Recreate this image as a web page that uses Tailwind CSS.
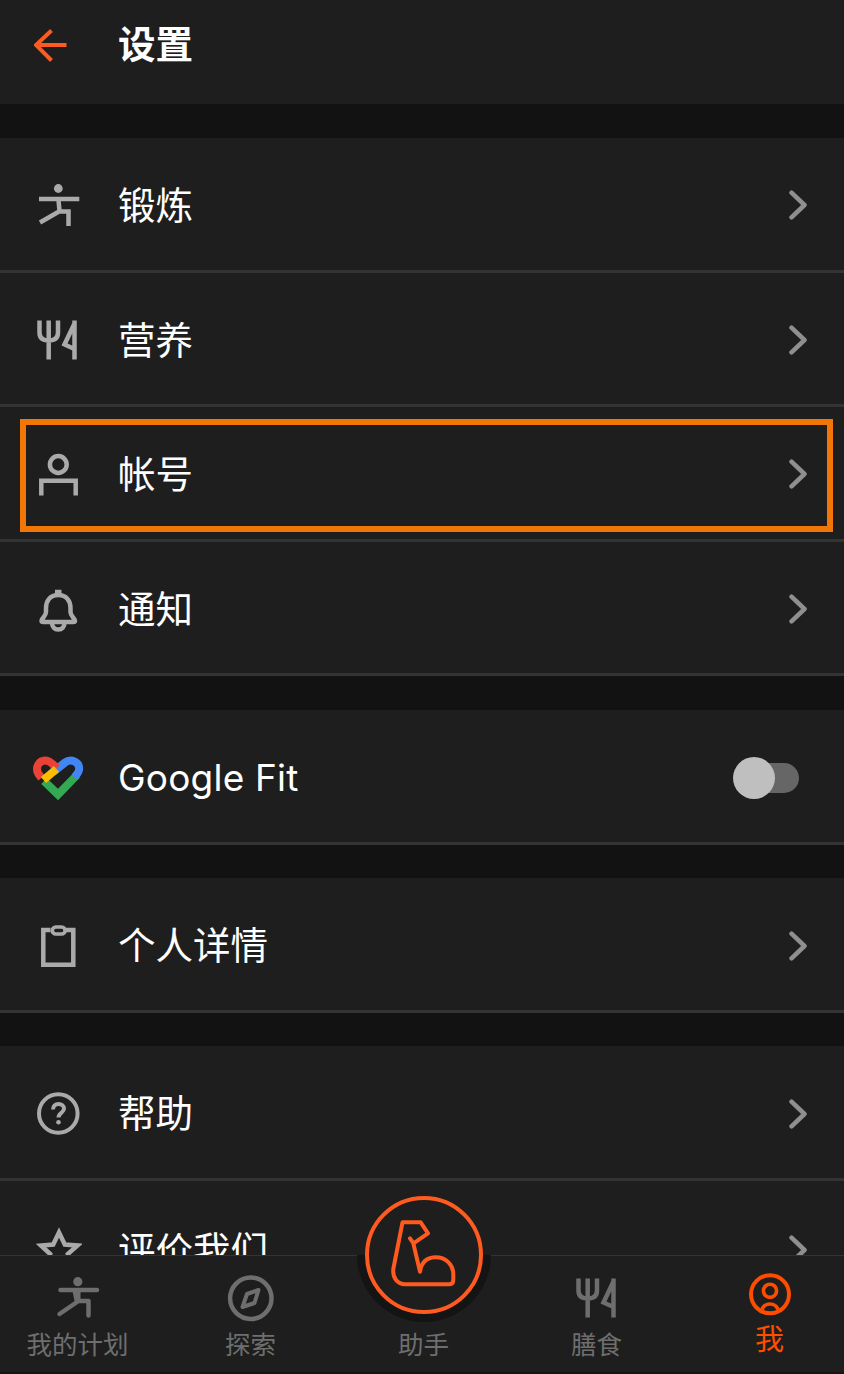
<!DOCTYPE html>
<html lang="zh-CN">
<head>
<meta charset="utf-8">
<title>设置</title>
<script src="https://cdn.jsdelivr.net/npm/@tailwindcss/browser@4"></script>
</head>
<body class="bg-[#121212]">
<div class="relative w-[844px] h-[1374px] overflow-hidden bg-[#121212] text-white font-['Inter','Noto_Sans_CJK_SC',sans-serif]">

  <header class="h-[104px] bg-[#1e1e1e] flex items-center pl-[34px] pb-[14px] mb-[34px]">
    <svg class="w-[48px] h-[48px] shrink-0" viewBox="34 21 48 48" fill="none" stroke="#ff5a1f" stroke-width="4"><path d="M66.5 45H36.5M51.5 30.5L36 45L51.5 60.5"/></svg>
    <h1 class="ml-[36px] text-[37.5px] leading-none font-bold">设置</h1>
  </header>

  <section class="mb-[34px]">
    <div class="h-[134.5px] bg-[#1e1e1e] border-b-[3px] border-[#333333] pt-[3px] flex items-center pl-[34px] pr-[37px]">
      <svg class="w-[48px] h-[48px] shrink-0" viewBox="34 181 48 48" fill="none" stroke="#aaaaaa" stroke-width="4.5"><circle cx="58.3" cy="188.5" r="4.4" fill="#aaaaaa" stroke="none"/><path d="M39 199H79.3M58.5 200L59.5 211M40 222.5L59 211.5H68.5V226"/></svg>
      <span class="ml-[36px] flex-1 text-[37.5px] leading-none pt-[1px]">锻炼</span>
      <svg class="w-[18px] h-[30px]" viewBox="0 0 18 30" fill="none" stroke="#8f8f8f" stroke-width="4.5" stroke-linecap="round" stroke-linejoin="round"><path d="M2.5 2.7L15.5 15L2.5 27.3"/></svg>
    </div>
    <div class="h-[134.5px] bg-[#1e1e1e] border-b-[3px] border-[#333333] pt-[3px] flex items-center pl-[34px] pr-[37px]">
      <svg class="w-[48px] h-[48px] shrink-0" viewBox="34 316.5 48 48" fill="none" stroke="#aaaaaa" stroke-width="4.5"><path d="M39.5 321V333Q39.5 341 48.7 341Q58 341 58 333V321M48.7 321V360M74.5 321V360M74.5 324L64.5 345L74.5 349.5"/></svg>
      <span class="ml-[36px] flex-1 text-[37.5px] leading-none pt-[1px]">营养</span>
      <svg class="w-[18px] h-[30px]" viewBox="0 0 18 30" fill="none" stroke="#8f8f8f" stroke-width="4.5" stroke-linecap="round" stroke-linejoin="round"><path d="M2.5 2.7L15.5 15L2.5 27.3"/></svg>
    </div>
    <div class="h-[134.5px] bg-[#1e1e1e] border-b-[3px] border-[#333333] pt-[3px] flex items-center pl-[34px] pr-[37px]">
      <svg class="w-[48px] h-[48px] shrink-0" viewBox="34 450 48 48" fill="none" stroke="#aaaaaa" stroke-width="4.5"><circle cx="58.3" cy="464.5" r="8.4"/><path d="M41.3 495.5V480.7H75.7V495.5"/></svg>
      <span class="ml-[36px] flex-1 text-[37.5px] leading-none pt-[1px]">帐号</span>
      <svg class="w-[18px] h-[30px]" viewBox="0 0 18 30" fill="none" stroke="#8f8f8f" stroke-width="4.5" stroke-linecap="round" stroke-linejoin="round"><path d="M2.5 2.7L15.5 15L2.5 27.3"/></svg>
    </div>
    <div class="h-[134.5px] bg-[#1e1e1e] border-b-[3px] border-[#333333] pt-[3px] flex items-center pl-[34px] pr-[37px]">
      <svg class="w-[48px] h-[48px] shrink-0" viewBox="34 585 48 48" fill="none" stroke="#aaaaaa" stroke-width="4.5" stroke-linejoin="round"><path d="M58.3 595C50 595 46 601 46 608V612C46 615 43.5 617 42 619.5Q40.5 622 43 622H73.5Q76 622 74.5 619.5C73 617 70.5 615 70.5 612V608C70.5 601 66.5 595 58.3 595Z"/><path d="M55 592H61.5M52 622.5C52 627 54.5 629.5 58.3 629.5C62 629.5 64.5 627 64.5 622.5"/></svg>
      <span class="ml-[36px] flex-1 text-[37.5px] leading-none pt-[1px]">通知</span>
      <svg class="w-[18px] h-[30px]" viewBox="0 0 18 30" fill="none" stroke="#8f8f8f" stroke-width="4.5" stroke-linecap="round" stroke-linejoin="round"><path d="M2.5 2.7L15.5 15L2.5 27.3"/></svg>
    </div>
  </section>

  <section class="mb-[33px]">
    <div class="h-[135px] bg-[#1e1e1e] border-b-[3px] border-[#333333] pt-[3px] flex items-center pl-[31px] pr-[45px]">
      <svg class="w-[54px] h-[48px] shrink-0" viewBox="31 753 54 48" fill="none" stroke-width="8"><path d="M44 780L58 793.5L77 774" stroke="#34a853"/><path d="M53 771L65 761.5C71 757 79.2 761 79.2 767.5C79.2 771 77.5 773 74.5 776" stroke="#4285f4"/><path d="M41.5 777L38.5 773C34.5 766 39.5 759.5 45 759.5C48.5 759.5 50.5 761 52.5 763L57 767" stroke="#ea4335"/><path d="M43.5 779L56.5 768" stroke="#fbbc04"/></svg>
      <span class="ml-[33px] flex-1 text-[37px] leading-none font-['Inter',sans-serif] tracking-[0.2px]">Google Fit</span>
      <div class="relative w-[66px] h-[30px]">
        <div class="absolute right-0 top-0 w-[54px] h-[30px] rounded-full bg-[#666666]"></div>
        <div class="absolute left-0 top-[-6px] w-[42px] h-[42px] rounded-full bg-[#bfbfbf]"></div>
      </div>
    </div>
  </section>

  <section class="mb-[33px]">
    <div class="h-[135px] bg-[#1e1e1e] border-b-[3px] border-[#333333] pt-[3px] flex items-center pl-[34px] pr-[37px]">
      <svg class="w-[48px] h-[48px] shrink-0" viewBox="34 922 48 48" fill="none" stroke="#aaaaaa" stroke-width="4.5"><path d="M50.5 930H43.3V964.7H73.3V930H66"/><rect x="52.3" y="927" width="12.8" height="7" rx="3.5" stroke-width="3.6"/></svg>
      <span class="ml-[36px] flex-1 text-[37.5px] leading-none pt-[1px]">个人详情</span>
      <svg class="w-[18px] h-[30px]" viewBox="0 0 18 30" fill="none" stroke="#8f8f8f" stroke-width="4.5" stroke-linecap="round" stroke-linejoin="round"><path d="M2.5 2.7L15.5 15L2.5 27.3"/></svg>
    </div>
  </section>

  <section>
    <div class="h-[135px] bg-[#1e1e1e] border-b-[3px] border-[#333333] pt-[3px] flex items-center pl-[34px] pr-[37px]">
      <svg class="w-[48px] h-[48px] shrink-0" viewBox="34 1090 48 48" fill="none" stroke="#aaaaaa" stroke-width="4"><circle cx="58.3" cy="1113.5" r="19.3"/><path d="M53 1109.5C53 1106 55.3 1104 58.5 1104C61.7 1104 64 1106 64 1108.8C64 1112.5 58.5 1113 58.5 1117.5"/><circle cx="58.5" cy="1122.3" r="2.3" fill="#aaaaaa" stroke="none"/></svg>
      <span class="ml-[36px] flex-1 text-[37.5px] leading-none pt-[1px]">帮助</span>
      <svg class="w-[18px] h-[30px]" viewBox="0 0 18 30" fill="none" stroke="#8f8f8f" stroke-width="4.5" stroke-linecap="round" stroke-linejoin="round"><path d="M2.5 2.7L15.5 15L2.5 27.3"/></svg>
    </div>
    <div class="h-[134.5px] bg-[#1e1e1e] pt-[3px] flex items-center pl-[34px] pr-[37px]">
      <svg class="w-[48px] h-[48px] shrink-0" viewBox="34 1225 48 48" fill="none" stroke="#aaaaaa" stroke-width="4.5"><path d="M59 1231.5L64.8 1243.5L77.5 1244.5L67.8 1253L71 1266L59 1259L47 1266L50.2 1253L41 1244.5L53.2 1243.5Z"/></svg>
      <span class="ml-[36px] flex-1 text-[37.5px] leading-none pt-[1px]">评价我们</span>
      <svg class="w-[18px] h-[30px]" viewBox="0 0 18 30" fill="none" stroke="#8f8f8f" stroke-width="4.5" stroke-linecap="round" stroke-linejoin="round"><path d="M2.5 2.7L15.5 15L2.5 27.3"/></svg>
    </div>
  </section>

  <!-- highlight frame -->
  <div class="absolute left-[20px] top-[419px] w-[813px] h-[112.5px] border-[6px] border-[#f27507]"></div>

  <!-- bottom navigation -->
  <nav class="absolute left-0 right-0 bottom-0 h-[119px] bg-[#1e1e1e] border-t border-[#333333] border-b-2 border-b-[#141414] flex ml-[-9px] w-[865px] text-[25.5px] leading-none text-[#6e6e6e]">
    <div class="w-[173px] flex flex-col items-center pt-[18px]">
      <svg class="w-[48px] h-[48px] shrink-0" viewBox="53.5 1273 48 48" fill="none" stroke="#6e6e6e" stroke-width="4.5" stroke-linecap="round" stroke-linejoin="round"><circle cx="77.3" cy="1280.7" r="4.6" fill="#6e6e6e" stroke="none"/><path d="M60 1289H96.5M75 1290L78 1300L59 1313M78 1300H88V1314.5"/><path d="M72 1290H80L80 1300H74Z" fill="#6e6e6e" stroke="none"/></svg>
      <span class="mt-[10px]">我的计划</span>
    </div>
    <div class="w-[173px] flex flex-col items-center pt-[18px]">
      <svg class="w-[48px] h-[48px] shrink-0" viewBox="226.5 1273 48 48" fill="none" stroke="#6e6e6e" stroke-width="4.5"><circle cx="250.3" cy="1297.3" r="20.7"/><path d="M258 1289L254 1302L242 1306L246.5 1293Z" fill="none" stroke-width="4" stroke-linejoin="round"/></svg>
      <span class="mt-[10px]">探索</span>
    </div>
    <div class="w-[173px] relative flex flex-col items-center pt-[76px]">
      <span>助手</span>
    </div>
    <div class="w-[173px] flex flex-col items-center pt-[18px]">
      <svg class="w-[48px] h-[48px] shrink-0" viewBox="34 316.5 48 48" fill="none" stroke="#6e6e6e" stroke-width="4.5"><path d="M39.5 321V333Q39.5 341 48.7 341Q58 341 58 333V321M48.7 321V360M74.5 321V360M74.5 324L64.5 345L74.5 349.5"/></svg>
      <span class="mt-[10px]">膳食</span>
    </div>
    <div class="w-[173px] flex flex-col items-center pt-[14px] text-[#ff4d00]">
      <svg class="w-[48px] h-[48px] shrink-0" viewBox="746 1269 48 48" fill="none" stroke="#ff4d00" stroke-width="4"><circle cx="770" cy="1293.3" r="19"/><circle cx="770" cy="1289.8" r="6.6" stroke-width="3.6"/><path d="M762 1308.5C763.5 1304.5 766.5 1303 770 1303C773.5 1303 776.5 1304.5 778 1308.5" stroke-width="3.6"/></svg>
      <span class="mt-[7px] text-[29px]">我</span>
    </div>
  </nav>

  <!-- centre assistant button, lying over the nav's top edge -->
  <div class="absolute left-[356.5px] top-[1255px] w-[134.5px] h-[67px] rounded-b-full bg-[#141414]"></div>
  <div class="absolute left-[365px] top-[1196px] w-[118px] h-[118px] rounded-full bg-[#1e1e1e] border-4 border-[#ff5a1f] flex items-center justify-center">
    <svg class="w-[70px] h-[70px]" viewBox="389 1220 70 70" fill="none" stroke="#ff5a1f" stroke-width="4" stroke-linecap="round" stroke-linejoin="round"><path d="M410 1238.3L413.5 1243.3L428 1233.3L420.7 1222.3H402.5L393.3 1269C392.5 1278 397.5 1284.3 405 1284.3H449C451.5 1284.3 453.3 1283 453.3 1280V1274C453.3 1265 446 1257 435 1257.3C426.5 1257.7 421.5 1262 420 1271.7L413 1242"/></svg>
  </div>
</div>
</body>
</html>
